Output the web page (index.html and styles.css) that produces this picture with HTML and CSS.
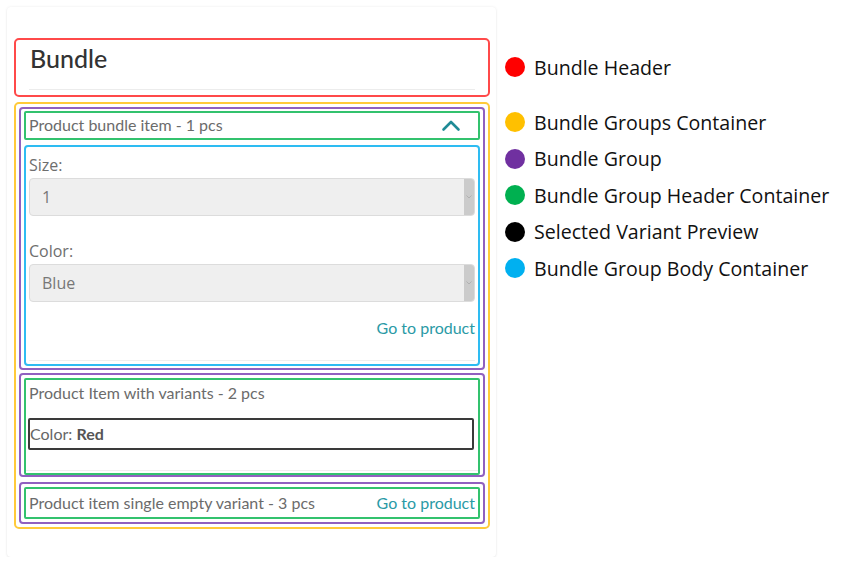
FILE: index.html
```html
<!DOCTYPE html>
<html lang="en">
<head>
<meta charset="utf-8">
<title>Bundle</title>
<link rel="stylesheet" href="styles.css">
</head>
<body>
<div class="page">
  <div class="card">
    <div class="bundle-header">
      <h2 class="bundle-title">Bundle</h2>
      <div class="header-rule"></div>
    </div>
    <div class="groups">
      <div class="group group-one">
        <div class="group-head">
          <span class="group-title">Product bundle item - 1 pcs</span>
          <svg class="chevron" width="20" height="13" viewBox="0 0 20 13"><path d="M2.5 10.5 L10 3 L17.5 10.5" fill="none" stroke="#1f8b96" stroke-width="2.6" stroke-linecap="round" stroke-linejoin="round"/></svg>
        </div>
        <div class="group-body">
          <div class="field">
            <label class="field-label">Size:</label>
            <div class="select"><span class="select-value">1</span><span class="select-arrow"><svg width="6" height="4" viewBox="0 0 6 4"><path d="M0.5 0.5 L3 3 L5.5 0.5" fill="none" stroke="#aaa" stroke-width="0.8"/></svg></span></div>
          </div>
          <div class="field">
            <label class="field-label">Color:</label>
            <div class="select"><span class="select-value">Blue</span><span class="select-arrow"><svg width="6" height="4" viewBox="0 0 6 4"><path d="M0.5 0.5 L3 3 L5.5 0.5" fill="none" stroke="#aaa" stroke-width="0.8"/></svg></span></div>
          </div>
          <div class="link-row"><a class="product-link" href="#">Go to product</a></div>
          <div class="body-rule"></div>
        </div>
      </div>
      <div class="group group-two">
        <div class="group-head stacked">
          <span class="group-title">Product Item with variants - 2 pcs</span>
          <div class="variant-preview">Color: <b>Red</b></div>
          <div class="body-rule"></div>
        </div>
      </div>
      <div class="group group-three">
        <div class="group-head single">
          <span class="group-title">Product item single empty variant - 3 pcs</span>
          <a class="product-link" href="#">Go to product</a>
        </div>
      </div>
    </div>
  </div>
  <ul class="legend">
    <li class="legend-item first"><span class="dot red"></span>Bundle Header</li>
    <li class="legend-item gap"><span class="dot yellow"></span>Bundle Groups Container</li>
    <li class="legend-item"><span class="dot purple"></span>Bundle Group</li>
    <li class="legend-item"><span class="dot green"></span>Bundle Group Header Container</li>
    <li class="legend-item"><span class="dot black"></span>Selected Variant Preview</li>
    <li class="legend-item"><span class="dot blue"></span>Bundle Group Body Container</li>
  </ul>
</div>
</body>
</html>
```
FILE: styles.css
```css
* { box-sizing: border-box; }
html, body { margin: 0; padding: 0; background: #fff; }
body { font-family: "Open Sans", "Noto Sans", sans-serif; }

.page {
  display: flex;
  align-items: flex-start;
  padding: 7px 0 0 7px;
}

.card {
  width: 489px;
  height: 550px;
  background: #fff;
  border-radius: 4px;
  box-shadow: 0 0 3px rgba(0,0,0,0.08), 0 1px 2px rgba(0,0,0,0.05);
  padding: 31px 6px 0 7px;
}

.bundle-header {
  height: 59px;
  border: 2px solid #ff4a4a;
  border-radius: 5px;
  padding: 0 13px 0 13px;
  display: flex;
  flex-direction: column;
}
.bundle-title {
  margin: 0;
  font-family: "Lato", "Open Sans", sans-serif;
  font-weight: 500;
  font-size: 25px;
  line-height: 36px;
  color: #333;
  padding-left: 1px;
}
.header-rule {
  margin-top: auto;
  margin-bottom: 5px;
  height: 1px;
  background: #ececec;
}

.groups {
  margin-top: 5px;
  height: 427px;
  border: 2px solid #ffca3a;
  border-radius: 5px;
  padding: 3px 3px;
  display: flex;
  flex-direction: column;
}

.group {
  border: 2px solid #9060c0;
  border-radius: 4px;
  padding: 2px 3px 0 3px;
}
.group-one { padding-bottom: 2px; }
.group-two { margin-top: 3px; height: 104px; padding-top: 3px; padding-bottom: 0; flex: none; }
.group-three { margin-top: 5px; height: 42px; padding-top: 3px; flex: none; }

.group-head {
  border: 2px solid #33c26e;
  border-radius: 2px;
  height: 29px;
  padding: 0 3px;
  display: flex;
  align-items: center;
  justify-content: space-between;
}
.group-one .group-head .group-title { margin-top: -2px; }
.group-title {
  font-family: "Lato", "Open Sans", sans-serif;
  font-size: 16px;
  color: #6b6b6b;
  line-height: 22px;
}
.chevron { margin-right: 14px; margin-top: 0; }

.group-head.stacked {
  height: 97px;
  display: flex;
  flex-direction: column;
  align-items: stretch;
  justify-content: flex-start;
  padding: 2px 0 0 0;
}
.group-head.stacked .group-title { padding-left: 3px; }
.variant-preview {
  margin: 14px 4px 0 2px;
  height: 32px;
  border: 2px solid #3a3a3a;
  border-radius: 2px;
  font-family: "Lato", "Open Sans", sans-serif;
  font-size: 16px;
  color: #666;
  line-height: 27px;
  padding-left: 0;
}
.variant-preview b { color: #555; font-weight: 700; }
.group-head.stacked .body-rule { margin-top: auto; margin-bottom: 2px; }

.group-head.single { height: 32px; }

.group-body {
  margin-top: 5px;
  height: 221px;
  border: 2px solid #2ebcf2;
  border-radius: 4px;
  padding: 0 3px;
  display: flex;
  flex-direction: column;
}

.field { display: flex; flex-direction: column; }
.field + .field { margin-top: 25px; }
.field-label {
  font-size: 16px;
  color: #6e6e6e;
  line-height: 20px;
  margin-top: 8px;
  margin-bottom: 3px;
}
.field + .field .field-label { margin-top: 0; }

.select {
  height: 38px;
  background: #efefef;
  border: 1px solid #dcdcdc;
  border-radius: 4px;
  display: flex;
  align-items: stretch;
  overflow: hidden;
}
.select-value {
  flex: 1;
  padding-left: 12px;
  font-size: 16px;
  color: #777;
  line-height: 36px;
}
.select-arrow {
  width: 10px;
  background: #cbcbcb;
  display: flex;
  align-items: center;
  justify-content: center;
}

.link-row {
  display: flex;
  justify-content: flex-end;
  margin-top: 15px;
}
.product-link {
  font-family: "Lato", "Open Sans", sans-serif;
  font-size: 16px;
  color: #2a9aa6;
  text-decoration: none;
  line-height: 22px;
}
.body-rule {
  margin-top: auto;
  margin-bottom: 3px;
  height: 1px;
  background: #efefef;
}

.legend {
  list-style: none;
  margin: 0 0 0 9px;
  padding: 47px 0 0 0;
  font-family: "Open Sans", "Noto Sans", sans-serif;
  font-size: 19.6px;
  color: #111;
}
.legend-item {
  display: flex;
  align-items: center;
  height: 26px;
  margin-bottom: 10.5px;
  white-space: nowrap;
}
.legend-item.gap { margin-top: 29px; }
.dot {
  width: 20px;
  height: 20px;
  border-radius: 50%;
  margin-right: 9px;
  flex: none;
}
.dot.red { background: #ff0000; }
.dot.yellow { background: #ffc000; }
.dot.purple { background: #7030a0; }
.dot.green { background: #00b050; }
.dot.black { background: #000; }
.dot.blue { background: #00b0f0; }
```
